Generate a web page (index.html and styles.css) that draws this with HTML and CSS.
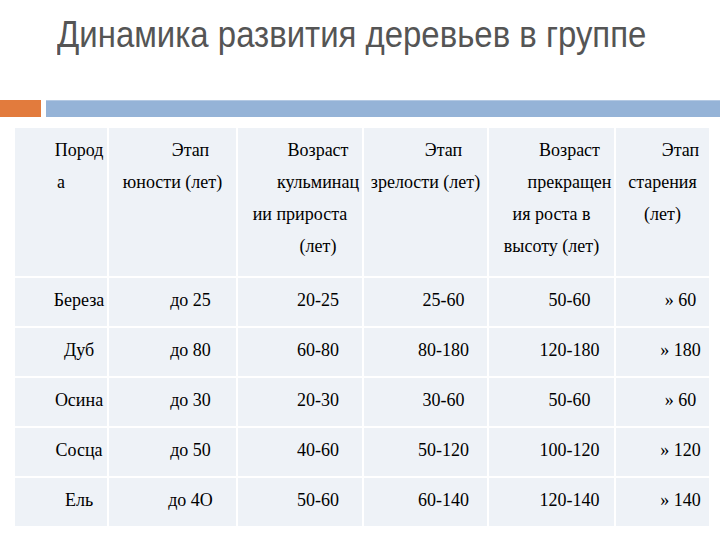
FILE: index.html
```html
<!DOCTYPE html>
<html lang="ru">
<head>
<meta charset="utf-8">
<link rel="stylesheet" href="styles.css">
</head>
<body>
<div class="slide">
  <h1 class="title"><span class="title-text">Динамика развития деревьев в группе</span></h1>
  <div class="bars"><div class="bar-orange"></div><div class="bar-blue"></div></div>
  <div class="table">
    <div class="cell head"><div class="ln ind">Пород</div><div class="ln left">а</div></div>
    <div class="cell head"><div class="ln ind">Этап</div><div class="ln">юности (лет)</div></div>
    <div class="cell head"><div class="ln ind">Возраст</div><div class="ln ind">кульминац</div><div class="ln">ии прироста</div><div class="ln ind">(лет)</div></div>
    <div class="cell head"><div class="ln ind">Этап</div><div class="ln">зрелости (лет)</div></div>
    <div class="cell head"><div class="ln ind">Возраст</div><div class="ln ind">прекращен</div><div class="ln">ия роста в</div><div class="ln">высоту (лет)</div></div>
    <div class="cell head"><div class="ln ind">Этап</div><div class="ln">старения</div><div class="ln">(лет)</div></div>

    <div class="cell">Береза</div><div class="cell">до 25</div><div class="cell">20-25</div><div class="cell">25-60</div><div class="cell">50-60</div><div class="cell">» 60</div>
    <div class="cell">Дуб</div><div class="cell">до 80</div><div class="cell">60-80</div><div class="cell">80-180</div><div class="cell">120-180</div><div class="cell">» 180</div>
    <div class="cell">Осина</div><div class="cell">до 30</div><div class="cell">20-30</div><div class="cell">30-60</div><div class="cell">50-60</div><div class="cell">» 60</div>
    <div class="cell">Сосца</div><div class="cell">до 50</div><div class="cell">40-60</div><div class="cell">50-120</div><div class="cell">100-120</div><div class="cell">» 120</div>
    <div class="cell">Ель</div><div class="cell">до 4О</div><div class="cell">50-60</div><div class="cell">60-140</div><div class="cell">120-140</div><div class="cell">» 140</div>
  </div>
</div>
</body>
</html>
```
FILE: styles.css
```css
html, body {
  margin: 0;
  padding: 0;
  background: #ffffff;
}
.slide {
  width: 720px;
  height: 540px;
  overflow: hidden;
}
.title {
  margin: 0;
  padding: 13px 0 0 57px;
  height: 86px;
  box-sizing: border-box;
  font-family: "Liberation Sans", Arial, sans-serif;
  font-weight: normal;
  font-size: 37px;
  line-height: 44px;
  color: #555555;
  white-space: nowrap;
}
.title-text {
  display: inline-block;
  transform: scaleX(0.89);
  transform-origin: 0 50%;
}
.bars {
  display: flex;
  height: 17px;
  margin-top: 14px;
  gap: 5px;
}
.bar-orange {
  width: 41px;
  background: #e27b3d;
}
.bar-blue {
  flex: 1;
  background: #95b3d7;
  border-top: 1px solid #b4c9e3;
}
.table {
  margin: 11px 0 0 15px;
  display: grid;
  grid-template-columns: 92px 127px 124px 123px 125px 93px;
  grid-template-rows: 148px repeat(5, 48px);
  gap: 2px;
  font-family: "Liberation Serif", "Times New Roman", serif;
  font-size: 18px;
  color: #000;
}
.cell {
  background: #eef2f7;
  text-align: center;
  padding: 10px 0 0 36px;
  line-height: 24px;
  white-space: nowrap;
}
.cell.head {
  padding: 6px 0 0 0;
  line-height: 32px;
}
.ln.ind {
  padding-left: 36px;
}
.ln.left {
  text-align: left;
  padding-left: 42px;
}
```
